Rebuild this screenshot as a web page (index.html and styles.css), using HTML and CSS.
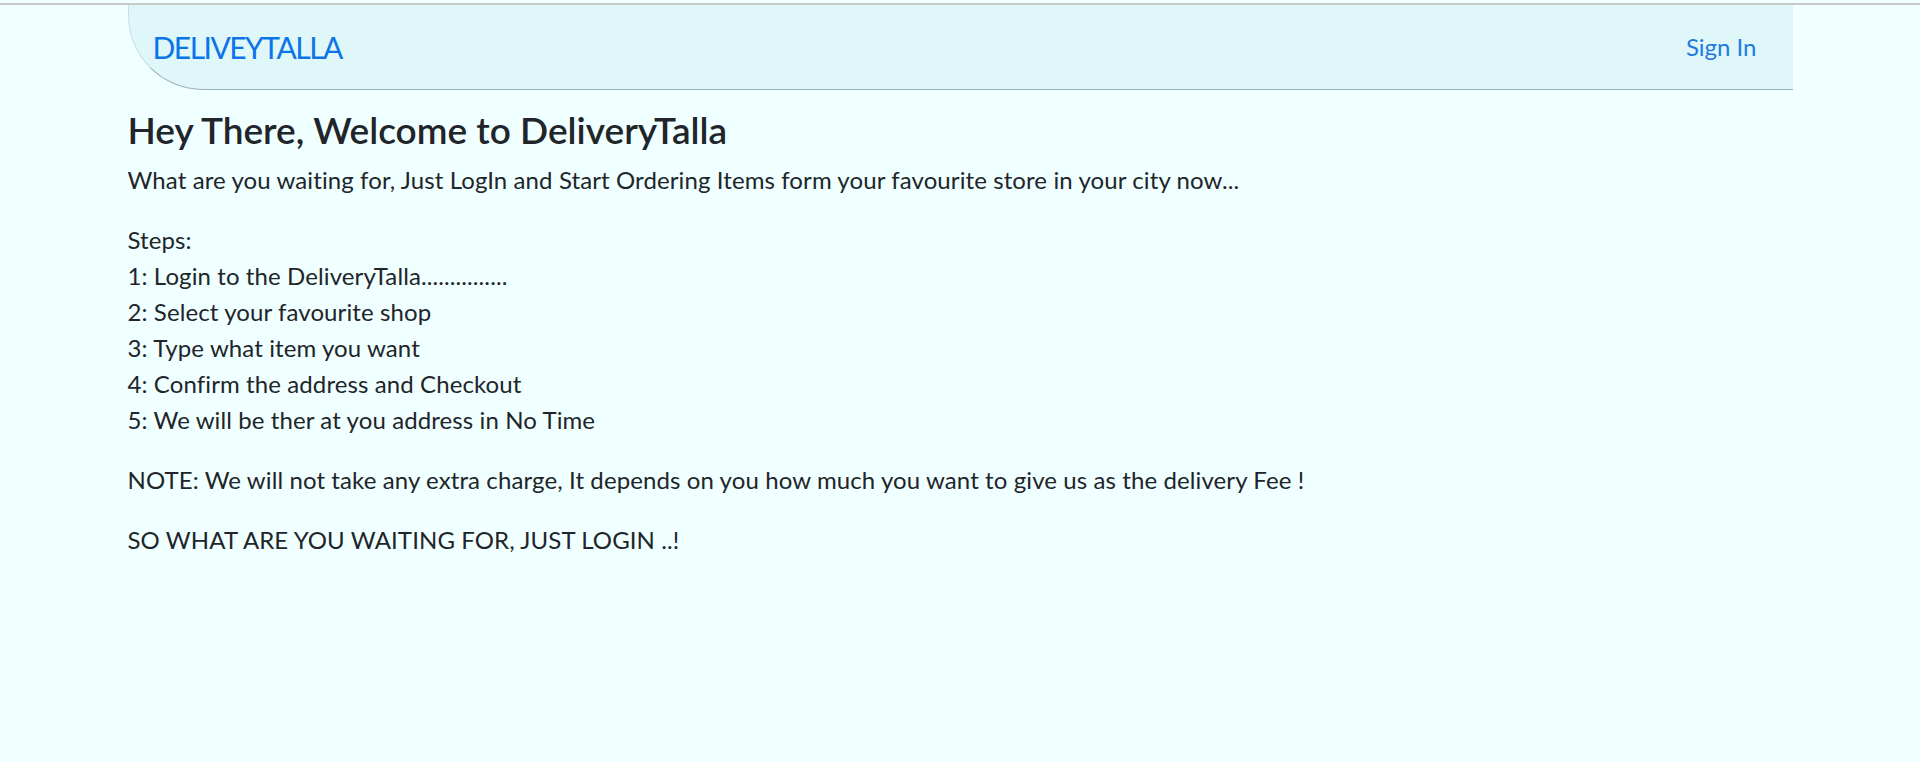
FILE: index.html
```html
<!DOCTYPE html>
<html lang="en">
<head>
<meta charset="utf-8">
<title>DeliveryTalla</title>
<link rel="stylesheet" href="styles.css">
</head>
<body>
<div class="topline"></div>
<div class="container">
  <nav class="navbar">
    <a class="brand" href="#">DELIVEYTALLA</a>
    <a class="nav-link" href="#">Sign In</a>
  </nav>
  <h3 class="title">Hey There, Welcome to DeliveryTalla</h3>
  <p>What are you waiting for, Just LogIn and Start Ordering Items form your favourite store in your city now...</p>
  <p>Steps:<br>1: Login to the DeliveryTalla...............<br>2: Select your favourite shop<br>3: Type what item you want<br>4: Confirm the address and Checkout<br>5: We will be ther at you address in No Time</p>
  <p>NOTE: We will not take any extra charge, It depends on you how much you want to give us as the delivery Fee !</p>
  <p>SO WHAT ARE YOU WAITING FOR, JUST LOGIN ..!</p>
</div>
</body>
</html>
```
FILE: styles.css
```css
html, body {
  margin: 0;
  padding: 0;
}
body {
  background: #f0ffff;
  font-family: Lato, "Noto Sans", sans-serif;
  font-size: 24px;
  line-height: 36px;
  color: #212529;
  min-height: 762px;
}
.topline {
  height: 2px;
  margin-top: 3px;
  background: #c9c9c9;
}
.container {
  width: 1710px;
  margin: 0 auto;
  padding: 0 22.5px;
  box-sizing: border-box;
}
.navbar {
  display: flex;
  align-items: center;
  justify-content: space-between;
  background: #e0f7fa;
  padding: 12px 24px;
  height: 85px;
  box-sizing: border-box;
  border-bottom: 1px solid #9fb0bd;
  border-left: 1px solid #c5dfe4;
  border-bottom-left-radius: 75px;
}
.brand {
  color: #0a74e8;
  font-size: 30px;
  line-height: 45px;
  letter-spacing: -1.5px;
  text-decoration: none;
}
.nav-link {
  color: #1f7ae0;
  font-size: 24px;
  line-height: 36px;
  padding: 0 12px;
  text-decoration: none;
}
.title {
  font-size: 37px;
  line-height: 50px;
  font-weight: 600;
  margin: 15px 0 7px;
}
p {
  margin: 0 0 24px;
  letter-spacing: 0.1px;
}
```
